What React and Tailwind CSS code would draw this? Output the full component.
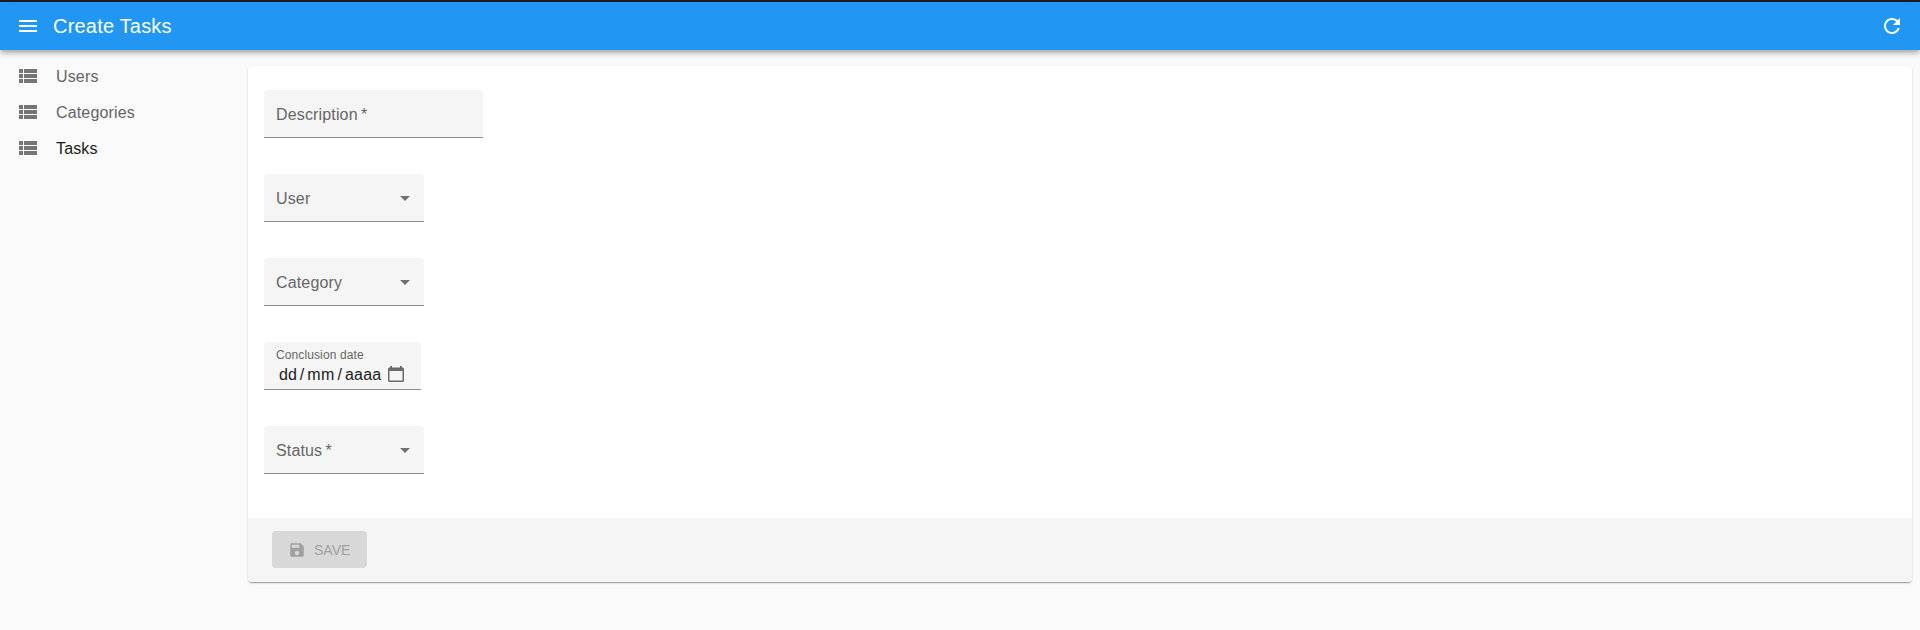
const label = 'pt-0.5 text-base leading-6 tracking-[0.15px] text-[#666666]';
const field = 'flex h-12 rounded-t-[4px] border-b border-[#8c8c8c] bg-[#f5f5f5] px-3';

function Icon({ d, className, viewBox = '0 0 24 24' }) {
  return (
    <svg viewBox={viewBox} fill="currentColor" fillRule="evenodd" className={className} aria-hidden="true">
      <path d={d} />
    </svg>
  );
}

const icons = {
  menu: 'M3 18h18v-2H3v2zm0-5h18v-2H3v2zm0-7v2h18V6H3z',
  refresh:
    'M17.65 6.35C16.2 4.9 14.21 4 12 4c-4.42 0-7.99 3.58-7.99 8s3.57 8 7.99 8c3.73 0 6.84-2.55 7.73-6h-2.08c-.82 2.33-3.04 4-5.65 4-3.31 0-6-2.69-6-6s2.69-6 6-6c1.66 0 3.14.69 4.22 1.78L13 11h7V4l-2.35 2.35z',
  list: 'M3 14h4v-4H3v4zm0 5h4v-4H3v4zM3 9h4V5H3v4zm5 5h13v-4H8v4zm0 5h13v-4H8v4zM8 5v4h13V5H8z',
  arrow: 'M7 10l5 5 5-5z',
  save: 'M17 3H5c-1.11 0-2 .9-2 2v14c0 1.1.89 2 2 2h14c1.1 0 2-.9 2-2V7l-4-4zm-5 16c-1.66 0-3-1.34-3-3s1.34-3 3-3 3 1.34 3 3-1.34 3-3 3zm3-10H5V5h10v4z',
  calendar:
    'M2.2 0h1.8v1.5h8V0h1.8v1.5h.7c.83 0 1.5.67 1.5 1.5v11.5c0 .83-.67 1.5-1.5 1.5h-13C.67 16 0 15.33 0 14.5V3c0-.83.67-1.5 1.5-1.5h.7V0zM1.5 5v9.5h13V5h-13z',
};

function MenuItem({ text, active }) {
  return (
    <a className="flex h-9 items-center gap-4 px-4">
      <Icon d={icons.list} className="size-6 text-[#757575]" />
      <span
        className={
          active
            ? 'pt-0.5 text-base leading-6 tracking-[0.15px] text-[#1a1a1a]'
            : 'pt-0.5 text-base leading-6 tracking-[0.15px] text-[#646464]'
        }
      >
        {text}
      </span>
    </a>
  );
}

function SelectField({ text }) {
  return (
    <div className={`${field} w-40 items-center justify-between pr-[7px]`}>
      <span className={label}>{text}</span>
      <Icon d={icons.arrow} className="mt-px size-6 text-[#707070]" />
    </div>
  );
}

export default function App() {
  return (
    <div className="flex h-[630px] flex-col overflow-hidden bg-[#fafafa] font-['Liberation_Sans',Arial,sans-serif]">
      <div className="h-0.5 shrink-0 bg-[#1c1e26]" />
      <header className="flex h-12 shrink-0 items-center bg-[#2196f3] px-4 text-white shadow-[0px_2px_4px_-1px_rgba(0,0,0,0.2),0px_4px_5px_0px_rgba(0,0,0,0.14),0px_1px_10px_0px_rgba(0,0,0,0.12)]">
        <Icon d={icons.menu} className="size-6" />
        <h1 className="ml-[13px] flex-1 text-xl leading-8 tracking-[0.2px]">Create Tasks</h1>
        <Icon d={icons.refresh} className="size-6" />
      </header>
      <div className="flex flex-1">
        <nav className="w-[248px] shrink-0 pt-2">
          <MenuItem text="Users" />
          <MenuItem text="Categories" />
          <MenuItem text="Tasks" active />
        </nav>
        <main className="mt-4 mr-2 flex h-[516px] flex-1 flex-col overflow-hidden rounded-[4px] bg-white shadow-[0px_2px_1px_-1px_rgba(0,0,0,0.2),0px_1px_1px_0px_rgba(0,0,0,0.14),0px_1px_3px_0px_rgba(0,0,0,0.12)]">
          <form className="flex flex-1 flex-col items-start gap-9 px-4 pt-6">
            <div className={`${field} w-[219px] items-center`}>
              <span className={label}>Description&#8201;*</span>
            </div>
            <SelectField text="User" />
            <SelectField text="Category" />
            <div className={`${field} w-[157px] flex-col pt-1`}>
              <span className="text-xs leading-[18px] tracking-[0.11px] text-[#666666]">Conclusion date</span>
              <div className="flex h-[22px] items-center pl-[3px] text-base leading-5 text-[#1c1c1c]">
                <span>dd</span>
                <span className="mx-[3px]">/</span>
                <span className="tracking-[0.3px]">mm</span>
                <span className="mx-[3px]">/</span>
                <span className="tracking-[0.2px]">aaaa</span>
                <Icon d={icons.calendar} viewBox="0 0 16 16" className="mb-0.5 ml-[7px] size-4 text-[#6b6b6b]" />
              </div>
            </div>
            <SelectField text={'Status\u2009*'} />
          </form>
          <footer className="flex h-16 shrink-0 items-start bg-[#f5f5f5] px-6 pt-[13px]">
            <button
              disabled
              className="flex h-[37px] w-[95px] items-center gap-2 rounded-[4px] bg-[#d8d8d8] px-4 text-sm leading-6 text-[#a0a0a0]"
            >
              <Icon d={icons.save} className="size-[18px] shrink-0" />
              <span>SAVE</span>
            </button>
          </footer>
        </main>
      </div>
    </div>
  );
}
